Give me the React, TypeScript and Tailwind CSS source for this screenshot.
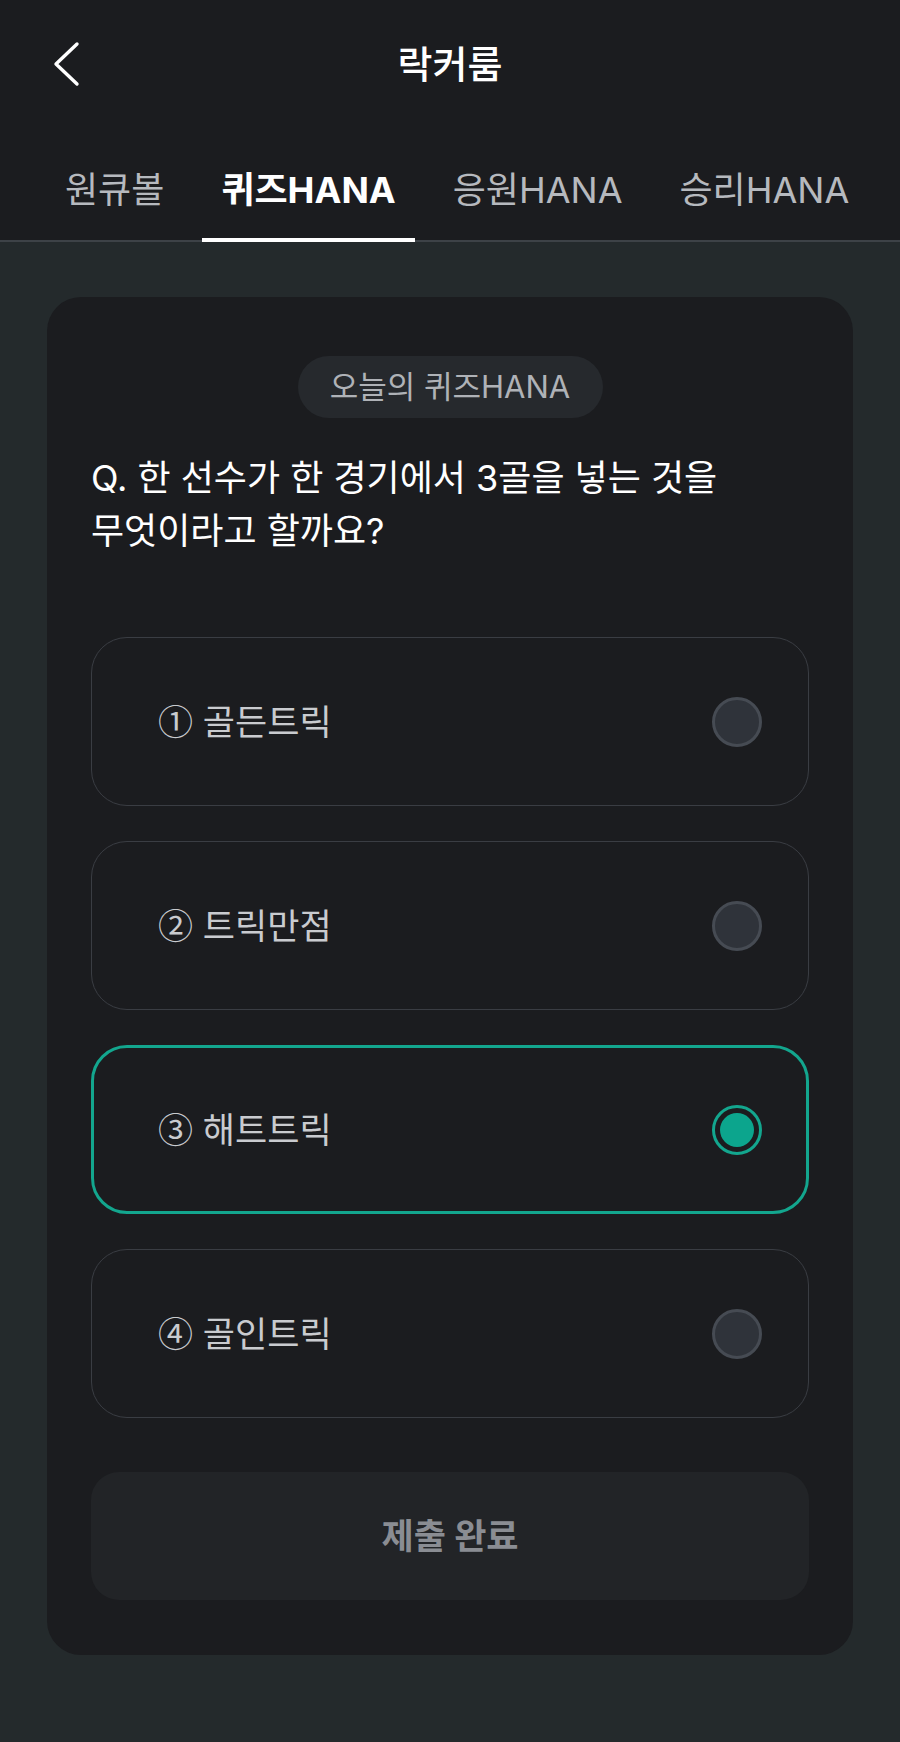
import React from "react"

const tabs = ["원큐볼", "퀴즈HANA", "응원HANA", "승리HANA"]

const options = [
  { num: "①", label: "골든트릭" },
  { num: "②", label: "트릭만점" },
  { num: "③", label: "해트트릭", selected: true },
  { num: "④", label: "골인트릭" },
]

function Radio({ selected }: { selected?: boolean }) {
  if (selected) {
    return (
      <div className="w-[50px] h-[50px] rounded-full border-[3px] border-[#13a68e] flex items-center justify-center">
        <div className="w-[34px] h-[34px] rounded-full bg-[#0ca58d]" />
      </div>
    )
  }
  return <div className="w-[50px] h-[50px] rounded-full bg-[#2f333a] border-[3px] border-[#464b53]" />
}

export default function App() {
  return (
    <div className="min-h-screen bg-[#242a2c] font-[Inter,'Noto_Sans_CJK_KR',sans-serif] select-none">
      {/* Header */}
      <header className="bg-[#1b1c1f]">
        <div className="h-[128px] flex items-center">
          <div className="w-[120px] pl-[52px] flex items-center">
            <svg width="28" height="46" viewBox="0 0 28 46" fill="none">
              <polyline
                points="25,3 4,23 25,43"
                stroke="#ffffff"
                strokeWidth="3.4"
                strokeLinecap="round"
                strokeLinejoin="round"
              />
            </svg>
          </div>
          <h1 className="flex-1 text-center text-[38px] font-medium text-white">락커룸</h1>
          <div className="w-[120px]" />
        </div>

        {/* Tabs */}
        <nav className="flex pl-[46px] gap-[19px] border-b-2 border-[#3d4247]">
          {tabs.map((t) => {
            const active = t === "퀴즈HANA"
            return (
              <div key={t} className="flex flex-col items-stretch -mb-[2px]">
                <span
                  className={
                    active
                      ? "mt-[42px] h-[40px] px-[19px] leading-[40px] text-[36px] font-bold text-white"
                      : "mt-[42px] h-[40px] px-[19px] leading-[40px] text-[36px] text-[#b6b9be]"
                  }
                >
                  {t}
                </span>
                <div className={active ? "mt-[28px] h-[4px] bg-white" : "mt-[28px] h-[4px]"} />
              </div>
            )
          })}
        </nav>
      </header>

      {/* Quiz card */}
      <main className="px-[47px] pt-[55px] pb-[86px]">
        <section className="rounded-[34px] bg-[#1b1c1f] px-[44px] pt-[59px] pb-[55px]">
          <div className="mx-auto w-[305px] h-[62px] rounded-full bg-[#26292d] flex items-center justify-center text-[31px] text-[#afb2b7]">
            오늘의 퀴즈HANA
          </div>

          <p className="mt-[34px] text-[36px] leading-[53px] text-white break-keep">
            Q. 한 선수가 한 경기에서 3골을 넣는 것을
            <br />
            무엇이라고 할까요?
          </p>

          <div className="mt-[79px] flex flex-col gap-[35px]">
            {options.map((o) => (
              <div
                key={o.label}
                className={
                  o.selected
                    ? "h-[169px] rounded-[36px] border-[3px] border-[#13a68e] flex items-center justify-between pl-[64px] pr-[44px]"
                    : "h-[169px] rounded-[36px] border-[1.5px] border-[#3a3d43] flex items-center justify-between pl-[66px] pr-[46px]"
                }
              >
                <span className="text-[35px] text-[#c9cbcf]">
                  <span className="font-['Noto_Sans_CJK_KR',sans-serif]">{o.num}</span> {o.label}
                </span>
                <Radio selected={o.selected} />
              </div>
            ))}
          </div>

          <button className="mt-[54px] w-full h-[128px] rounded-[28px] bg-[#222427] text-[35px] font-bold text-[#8a8d93]">
            제출 완료
          </button>
        </section>
      </main>
    </div>
  )
}
